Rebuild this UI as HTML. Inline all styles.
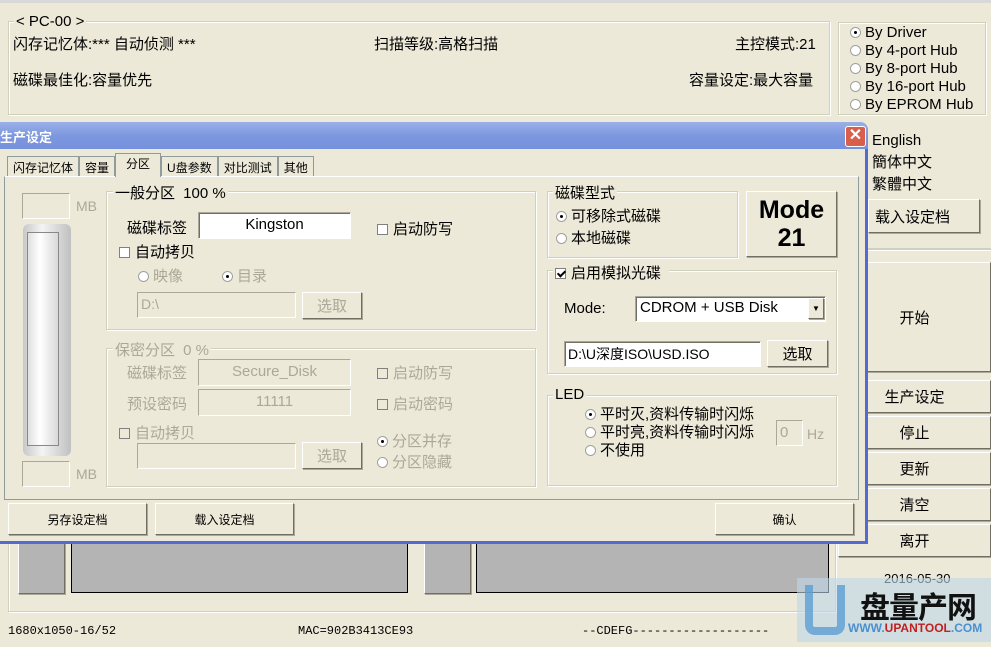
<!DOCTYPE html>
<html><head><meta charset="utf-8"><style>
*{box-sizing:border-box;margin:0;padding:0}
body{width:991px;height:647px;overflow:hidden;background:#ece9d8;position:relative;font-family:"Liberation Sans","Noto Sans CJK SC",sans-serif;font-size:15px;color:#000}
.a{position:absolute;white-space:nowrap}
.gb{position:absolute;border:1px solid #d0d0bf;box-shadow:1px 1px 0 #fff inset,1px 1px 0 #fff}
.btn{position:absolute;background:#ece9d8;border:1px solid;border-color:#fff #716f64 #716f64 #fff;box-shadow:1px 1px 0 #aca899;display:flex;align-items:center;justify-content:center}
.ed{position:absolute;background:#fff;border:1px solid;border-color:#aca899 #fff #fff #aca899;box-shadow:1px 1px 0 #716f64 inset}
.dis{color:#aca899}
.dised{position:absolute;background:#ece9d8;border:1px solid;border-color:#aca899 #fff #fff #aca899}
.cb{display:inline-block;width:11px;height:11px;background:#fff;border:1px solid #808080;vertical-align:-1px;margin-right:5px;position:relative}
.cb.on::after{content:"";position:absolute;left:3px;top:0px;width:3px;height:6px;border:solid #000;border-width:0 2px 2px 0;transform:rotate(45deg)}
.rd{display:inline-block;width:11px;height:11px;border-radius:50%;background:#fff;border:1px solid #a0a0a0;vertical-align:-1px;margin-right:4px;position:relative}
.rd.on::after{content:"";position:absolute;left:3px;top:3px;width:3px;height:3px;background:#000;border-radius:50%}
.gbar{position:absolute;background:#b4b4b4;border:1px solid #000}
.mono{font-family:"Liberation Mono",monospace;font-size:12px}
.tab{border:1px solid #919b9c;border-bottom:none;padding:2px 5px;background:#ece9d8}
</style></head><body>
<div class="a" style="left:0;top:0;width:991px;height:3px;background:#d8d8d8"></div>
<!-- top group -->
<div class="gb" style="left:8px;top:21px;width:822px;height:94px"></div>
<div class="a" style="left:14px;top:13px;background:#ece9d8;padding:0 2px">&lt; PC-00 &gt;</div>
<div class="a" style="left:13px;top:33px">闪存记忆体:*** 自动侦测 ***</div>
<div class="a" style="left:374px;top:33px">扫描等级:高格扫描</div>
<div class="a" style="left:735px;top:33px">主控模式:21</div>
<div class="a" style="left:13px;top:69px">磁碟最佳化:容量优先</div>
<div class="a" style="left:689px;top:69px">容量设定:最大容量</div>
<div class="gb" style="left:838px;top:22px;width:148px;height:93px"></div>
<div class="a" style="left:850px;top:24px;line-height:18px"><span class="rd on"></span>By Driver<br><span class="rd"></span>By 4-port Hub<br><span class="rd"></span>By 8-port Hub<br><span class="rd"></span>By 16-port Hub<br><span class="rd"></span>By EPROM Hub</div>
<div class="a" style="left:872px;top:130px;line-height:22px">English<br>簡体中文<br>繁體中文</div>
<div class="btn" style="left:868px;top:199px;width:112px;height:34px;justify-content:flex-start;padding-left:6px">载入设定档</div>
<div class="gb" style="left:838px;top:248px;width:153px;height:1px"></div>
<div class="btn" style="left:838px;top:262px;width:153px;height:110px">开始</div>
<div class="btn" style="left:838px;top:380px;width:153px;height:33px">生产设定</div>
<div class="btn" style="left:838px;top:416px;width:153px;height:33px">停止</div>
<div class="btn" style="left:838px;top:452px;width:153px;height:33px">更新</div>
<div class="btn" style="left:838px;top:488px;width:153px;height:33px">清空</div>
<div class="btn" style="left:838px;top:524px;width:153px;height:33px">离开</div>
<div class="a" style="left:884px;top:571px;font-size:13px">2016-05-30</div>
<!-- bottom area -->
<div class="gb" style="left:8px;top:530px;width:828px;height:82px"></div>
<div class="btn" style="left:18px;top:540px;width:47px;height:54px;background:#b4b4b4"></div>
<div class="gbar" style="left:71px;top:540px;width:337px;height:53px"></div>
<div class="btn" style="left:424px;top:540px;width:47px;height:54px;background:#b4b4b4"></div>
<div class="gbar" style="left:476px;top:540px;width:353px;height:53px"></div>
<div class="a mono" style="left:8px;top:624px">1680x1050-16/52</div>
<div class="a mono" style="left:298px;top:624px">MAC=902B3413CE93</div>
<div class="a mono" style="left:582px;top:624px">--CDEFG-------------------</div>
<!-- watermark -->
<div class="a" style="left:797px;top:578px;width:194px;height:64px;background:rgba(190,215,232,.6)"></div>
<div class="a" style="left:805px;top:585px;width:40px;height:50px;border:8px solid #5d9fd4;border-top:none;border-radius:0 0 10px 10px;opacity:.8"></div>
<div class="a" style="left:860px;top:583px;font-size:30px;font-weight:bold;color:#111;letter-spacing:-1px">盘量产网</div>
<div class="a" style="left:848px;top:621px;font-size:12px;color:#4a8fd0;font-weight:bold">WWW.<span style="color:#c02020">UPANTOOL</span>.COM</div>
<!-- dialog -->
<div class="a" style="left:-4px;top:122px;width:872px;height:422px;background:#ece9d8;border:3px solid #5569d0;border-top:none;border-radius:0 8px 0 0"></div>
<div class="a" style="left:-4px;top:122px;width:872px;height:27px;background:linear-gradient(#9bb0e8,#7d98de 50%,#7591dc);border-radius:0 8px 0 0"></div>
<div class="a" style="left:0;top:127px;color:#fff;font-size:13px;font-weight:bold">生产设定</div>
<div class="a" style="left:845px;top:126px;width:21px;height:21px;background:#d8604a;border:1px solid #fff;border-radius:3px;color:#fff;font-weight:bold;text-align:center;line-height:18px;font-size:16px">✕</div>
<!-- tabs -->
<div class="a" style="left:4px;top:176px;width:855px;height:324px;border:1px solid #919b9c;border-top-color:#fff"></div>
<div class="a" style="left:7px;top:156px;height:20px;font-size:12px;display:flex">
<span class="tab">闪存记忆体</span><span class="tab">容量</span><span class="tab" style="padding:1px 10px;margin-top:-3px;height:24px">分区</span><span class="tab">U盘参数</span><span class="tab">对比测试</span><span class="tab">其他</span></div>
<!-- left slider -->
<div class="dised" style="left:22px;top:193px;width:48px;height:26px"></div>
<div class="a dis" style="left:76px;top:198px;font-size:14px">MB</div>
<div class="a" style="left:23px;top:224px;width:48px;height:232px;border-radius:6px;background:linear-gradient(90deg,#c8c8c8,#f4f4f4 40%,#c0c0c0)"></div>
<div class="a" style="left:27px;top:232px;width:32px;height:214px;border:1px solid #888;background:linear-gradient(90deg,#e0e0e0,#fff 40%,#d8d8d8)"></div>
<div class="dised" style="left:22px;top:461px;width:48px;height:26px"></div>
<div class="a dis" style="left:76px;top:466px;font-size:14px">MB</div>
<!-- general partition -->
<div class="gb" style="left:106px;top:191px;width:430px;height:139px"></div>
<div class="a" style="left:113px;top:182px;background:#ece9d8;padding:0 2px">一般分区 <span style="margin-left:4px">100 %</span></div>
<div class="a" style="left:127px;top:217px">磁碟标签</div>
<div class="ed" style="left:198px;top:212px;width:153px;height:27px;text-align:center;line-height:24px">Kingston</div>
<div class="a" style="left:377px;top:218px"><span class="cb"></span>启动防写</div>
<div class="a" style="left:119px;top:241px"><span class="cb"></span>自动拷贝</div>
<div class="a dis" style="left:138px;top:265px"><span class="rd"></span>映像</div>
<div class="a dis" style="left:222px;top:265px"><span class="rd on"></span>目录</div>
<div class="dised" style="left:137px;top:292px;width:159px;height:26px;color:#aca899;padding:3px 3px;font-size:14px">D:\</div>
<div class="btn dis" style="left:302px;top:292px;width:60px;height:27px">选取</div>
<!-- secret partition -->
<div class="gb" style="left:106px;top:348px;width:430px;height:139px"></div>
<div class="a dis" style="left:113px;top:339px;background:#ece9d8;padding:0 2px">保密分区 <span style="margin-left:4px">0 %</span></div>
<div class="a dis" style="left:127px;top:362px">磁碟标签</div>
<div class="dised" style="left:198px;top:359px;width:153px;height:27px;text-align:center;line-height:24px;color:#aca899">Secure_Disk</div>
<div class="a dis" style="left:377px;top:362px"><span class="cb" style="background:#ece9d8"></span>启动防写</div>
<div class="a dis" style="left:127px;top:393px">预设密码</div>
<div class="dised" style="left:198px;top:389px;width:153px;height:27px;text-align:center;line-height:24px;color:#aca899">11111</div>
<div class="a dis" style="left:377px;top:393px"><span class="cb" style="background:#ece9d8"></span>启动密码</div>
<div class="a dis" style="left:119px;top:422px"><span class="cb" style="background:#ece9d8"></span>自动拷贝</div>
<div class="dised" style="left:137px;top:443px;width:159px;height:26px"></div>
<div class="btn dis" style="left:302px;top:442px;width:60px;height:27px">选取</div>
<div class="a dis" style="left:377px;top:431px;line-height:21px"><span class="rd on"></span>分区并存<br><span class="rd"></span>分区隐藏</div>
<!-- disk type -->
<div class="gb" style="left:547px;top:191px;width:191px;height:67px"></div>
<div class="a" style="left:553px;top:182px;background:#ece9d8;padding:0 2px">磁碟型式</div>
<div class="a" style="left:556px;top:206px;line-height:22px"><span class="rd on"></span>可移除式磁碟<br><span class="rd"></span>本地磁碟</div>
<div class="btn" style="left:746px;top:191px;width:91px;height:66px;font-weight:bold;font-size:25px;line-height:28px;text-align:center">Mode<br>21</div>
<div class="gb" style="left:547px;top:270px;width:290px;height:104px"></div>
<div class="a" style="left:553px;top:262px;background:#ece9d8;padding:0 8px 0 2px"><span class="cb on"></span>启用模拟光碟</div>
<div class="a" style="left:564px;top:300px">Mode:</div>
<div class="ed" style="left:635px;top:296px;width:191px;height:26px;padding:2px 4px;font-size:15px">CDROM + USB Disk</div>
<div class="btn" style="left:808px;top:298px;width:16px;height:21px;font-size:8px">▼</div>
<div class="ed" style="left:564px;top:341px;width:197px;height:26px;padding:2px 3px;font-size:14px">D:\U深度ISO\USD.ISO</div>
<div class="btn" style="left:767px;top:340px;width:61px;height:27px">选取</div>
<!-- LED -->
<div class="gb" style="left:547px;top:395px;width:290px;height:91px"></div>
<div class="a" style="left:553px;top:386px;background:#ece9d8;padding:0 2px">LED</div>
<div class="a" style="left:585px;top:406px;line-height:18px"><span class="rd on"></span>平时灭,资料传输时闪烁<br><span class="rd"></span>平时亮,资料传输时闪烁<br><span class="rd"></span>不使用</div>
<div class="dised" style="left:776px;top:420px;width:27px;height:26px;color:#aca899;padding:3px">0</div>
<div class="a dis" style="left:807px;top:426px;font-size:14px">Hz</div>
<!-- bottom buttons -->
<div class="btn" style="left:8px;top:503px;width:139px;height:32px;font-size:12px">另存设定档</div>
<div class="btn" style="left:155px;top:503px;width:139px;height:32px;font-size:12px">载入设定档</div>
<div class="btn" style="left:715px;top:503px;width:139px;height:32px;font-size:12px">确认</div>
</body></html>
